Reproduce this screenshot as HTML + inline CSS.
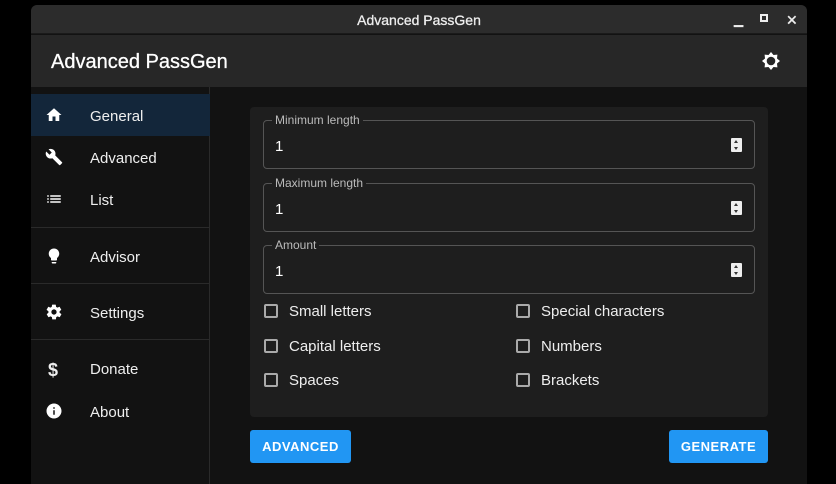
<!DOCTYPE html>
<html><head><style>
*{margin:0;padding:0;box-sizing:border-box}
body{width:836px;height:484px;background:#000;font-family:"Liberation Sans",sans-serif;color:#fff;position:relative;overflow:hidden}
.win{position:absolute;left:31px;top:5px;width:776px;height:479px;background:#121212;border-radius:6px 6px 0 0;overflow:hidden}
.tb{position:absolute;left:0;top:0;width:776px;height:29px;background:#2c2c2c;border-bottom:1px solid #1a1a1a;text-align:center;font-size:14px;line-height:30px;color:#eee;-webkit-text-stroke:.3px #eee}
.hd{position:absolute;left:0;top:30px;width:776px;height:52px;background:#272727}
.hd .t{position:absolute;left:20px;top:16px;font-size:20px;color:#fff;-webkit-text-stroke:.3px #fff}
.side{position:absolute;left:0;top:82px;width:179px;height:400px;border-right:1px solid #2a2a2a}
.it{position:absolute;left:0;width:179px;height:42px;font-size:15px;line-height:46px;color:#eee}
.it span{position:absolute;left:59px}
.it svg{position:absolute;left:14px;top:12px}
.sel{background:#13263a}
.dv{position:absolute;left:0;width:179px;height:1px;background:#2a2a2a}
.card{position:absolute;left:219px;top:102px;width:518px;height:310px;background:#1e1e1e;border-radius:4px}
.f{position:absolute;left:13px;width:492px;height:49px;border:1px solid #555;border-radius:4px}
.f .l{position:absolute;left:8px;top:-8px;background:#1e1e1e;padding:0 3px;font-size:12px;color:#bbb}
.f .v{position:absolute;left:11px;top:17px;font-size:15px}
.f .s{position:absolute;right:12px;top:17px;width:11px;height:14px;background:#eee;border-radius:1px}
.f .s:before{content:"";position:absolute;left:3px;top:2px;border:2.5px solid transparent;border-bottom:3px solid #333;border-top:0}
.f .s:after{content:"";position:absolute;left:3px;bottom:2px;border:2.5px solid transparent;border-top:3px solid #333;border-bottom:0}
.cb{position:absolute;font-size:15px;color:#eee}
.cb i{position:absolute;left:0;top:0;width:14px;height:14px;border:2px solid #aaa;border-radius:2px}
.cb span{position:absolute;left:25px;top:-1px;white-space:nowrap}
.btn{position:absolute;top:425px;height:33px;background:#2196f3;border-radius:3px;font-size:13px;font-weight:bold;letter-spacing:.5px;line-height:33px;text-align:center;color:#fff}
</style></head><body>
<div class="win">
<div class="tb">Advanced PassGen
<span style="position:absolute;left:703px;top:0;font-size:12px">▁</span>
<span style="position:absolute;left:729px;top:9px;width:8px;height:8px;border:2px solid #eee"></span>
<span style="position:absolute;left:755px;top:0;font-size:14px">✕</span>
</div>
<div class="hd"><div class="t">Advanced PassGen</div>
<svg style="position:absolute;left:730px;top:16px" width="20" height="20" viewBox="0 0 20 20"><polygon points="10,1 12.5,4 16.4,3.6 16,7.5 19,10 16,12.5 16.4,16.4 12.5,16 10,19 7.5,16 3.6,16.4 4,12.5 1,10 4,7.5 3.6,3.6 7.5,4" fill="#fff"/><circle cx="10" cy="10" r="4.3" fill="#272727"/></svg>
</div>
<div class="side">
<div class="it sel" style="top:7px"><svg width="18" height="18" viewBox="0 0 24 24"><path d="M10 20v-6h4v6h5v-8h3L12 3 2 12h3v8z" fill="#fff"/></svg><span>General</span></div>
<div class="it" style="top:49px"><svg width="18" height="18" viewBox="0 0 24 24"><path d="M22.7 19l-9.1-9.1c.9-2.3.4-5-1.5-6.9-2-2-5-2.4-7.4-1.3L9 6 6 9 1.6 4.7C.4 7.1.9 10.1 2.9 12.1c1.9 1.9 4.6 2.4 6.9 1.5l9.1 9.1c.4.4 1 .4 1.4 0l2.300-2.3c.5-.4.5-1.1.1-1.4z" fill="#fff"/></svg><span>Advanced</span></div>
<div class="it" style="top:91px"><svg width="18" height="18" viewBox="0 0 24 24"><path d="M3 13h2v-2H3v2zm0 4h2v-2H3v2zm0-8h2V7H3v2zm4 4h14v-2H7v2zm0 4h14v-2H7v2zM7 7v2h14V7H7z" fill="#fff"/></svg><span>List</span></div>
<div class="dv" style="top:140px"></div>
<div class="it" style="top:148px"><svg width="18" height="18" viewBox="0 0 24 24"><path d="M9 21c0 .5.4 1 1 1h4c.6 0 1-.5 1-1v-1H9v1zm3-19C8.1 2 5 5.1 5 9c0 2.4 1.2 4.5 3 5.7V17c0 .5.4 1 1 1h6c.6 0 1-.5 1-1v-2.3c1.8-1.3 3-3.4 3-5.7 0-3.9-3.1-7-7-7z" fill="#fff"/></svg><span>Advisor</span></div>
<div class="dv" style="top:196px"></div>
<div class="it" style="top:204px"><svg width="18" height="18" viewBox="0 0 24 24"><path d="M19.4 13c0-.3.1-.6.1-1s0-.7-.1-1l2.1-1.6c.2-.2.2-.4.1-.6l-2-3.5c-.1-.2-.4-.3-.6-.2l-2.5 1c-.5-.4-1.1-.7-1.7-1l-.4-2.6c0-.2-.2-.4-.5-.4h-4c-.2 0-.5.2-.5.4l-.4 2.6c-.6.3-1.2.6-1.700 1l-2.5-1c-.2-.1-.5 0-.6.2l-2 3.5c-.1.2-.1.5.1.6L4.6 11c0 .3-.1.6-.1 1s0 .7.1 1l-2.1 1.6c-.2.2-.2.4-.1.6l2 3.5c.1.2.4.3.6.2l2.5-1c.5.4 1.1.7 1.7 1l.4 2.6c0 .2.2.4.5.4h4c.2 0 .5-.2.5-.4l.4-2.6c.6-.3 1.2-.6 1.7-1l2.5 1c.2.1.5 0 .6-.2l2-3.5c.1-.2.1-.5-.1-.6L19.4 13zM12 15.5c-1.9 0-3.5-1.6-3.5-3.5s1.6-3.5 3.5-3.5 3.5 1.6 3.5 3.5-1.6 3.5-3.5 3.5z" fill="#fff"/></svg><span>Settings</span></div>
<div class="dv" style="top:252px"></div>
<div class="it" style="top:260px"><span style="left:17px;font-size:18px;font-weight:bold">$</span><span>Donate</span></div>
<div class="it" style="top:303px"><svg width="18" height="18" viewBox="0 0 24 24"><path d="M12 2C6.5 2 2 6.5 2 12s4.5 10 10 10 10-4.5 10-10S17.5 2 12 2zm1 15h-2v-6h2v6zm0-8h-2V7h2v2z" fill="#fff"/></svg><span>About</span></div>
</div>
<div class="card">
<div class="f" style="top:13px"><div class="l">Minimum length</div><div class="v">1</div><div class="s"></div></div>
<div class="f" style="top:76px"><div class="l">Maximum length</div><div class="v">1</div><div class="s"></div></div>
<div class="f" style="top:138px"><div class="l">Amount</div><div class="v">1</div><div class="s"></div></div>
<div class="cb" style="left:14px;top:197px"><i></i><span>Small letters</span></div>
<div class="cb" style="left:14px;top:232px"><i></i><span>Capital letters</span></div>
<div class="cb" style="left:14px;top:266px"><i></i><span>Spaces</span></div>
<div class="cb" style="left:266px;top:197px"><i></i><span>Special characters</span></div>
<div class="cb" style="left:266px;top:232px"><i></i><span>Numbers</span></div>
<div class="cb" style="left:266px;top:266px"><i></i><span>Brackets</span></div>
</div>
<div class="btn" style="left:219px;width:101px">ADVANCED</div>
<div class="btn" style="left:638px;width:99px">GENERATE</div>
</div>
</body></html>
